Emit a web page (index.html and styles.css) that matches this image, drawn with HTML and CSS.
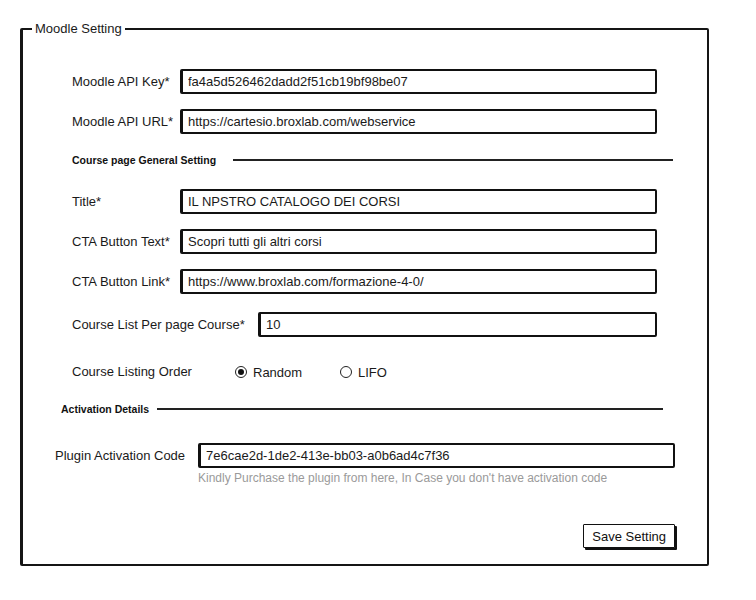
FILE: index.html
```html
<!DOCTYPE html>
<html lang="en">
<head>
<meta charset="utf-8">
<title>Moodle Setting</title>
<link rel="stylesheet" href="styles.css">
</head>
<body>
<fieldset class="frame">
  <legend class="frame-title">Moodle Setting</legend>
  <div class="content">
    <div class="row">
      <label class="label">Moodle API Key*</label>
      <input class="field" type="text" value="fa4a5d526462dadd2f51cb19bf98be07">
    </div>
    <div class="row">
      <label class="label">Moodle API URL*</label>
      <input class="field" type="text" value="https://cartesio.broxlab.com/webservice">
    </div>

    <div class="section section-course">
      <span class="section-title">Course page General Setting</span>
      <span class="section-line"></span>
    </div>

    <div class="row">
      <label class="label">Title*</label>
      <input class="field" type="text" value="IL NPSTRO CATALOGO DEI CORSI">
    </div>
    <div class="row">
      <label class="label">CTA Button Text*</label>
      <input class="field" type="text" value="Scopri tutti gli altri corsi">
    </div>
    <div class="row">
      <label class="label">CTA Button Link*</label>
      <input class="field" type="text" value="https://www.broxlab.com/formazione-4-0/">
    </div>
    <div class="row row-list">
      <label class="label label-wide">Course List Per page Course*</label>
      <input class="field" type="text" value="10">
    </div>

    <div class="radio-row">
      <span class="label label-order">Course Listing Order</span>
      <span class="radio-option"><span class="radio checked"></span>Random</span>
      <span class="radio-option"><span class="radio"></span>LIFO</span>
    </div>

    <div class="section section-activation">
      <span class="section-title">Activation Details</span>
      <span class="section-line"></span>
    </div>

    <div class="row row-activation">
      <label class="label label-activation">Plugin Activation Code</label>
      <input class="field" type="text" value="7e6cae2d-1de2-413e-bb03-a0b6ad4c7f36">
    </div>
    <p class="hint">Kindly Purchase the plugin from here, In Case you don't have activation code</p>

    <div class="actions">
      <button class="btn" type="button">Save Setting</button>
    </div>
  </div>
</fieldset>
</body>
</html>
```

FILE: styles.css
```css
* {
  box-sizing: border-box;
}

html, body {
  margin: 0;
  padding: 0;
  background: #fff;
}

body {
  font-family: "Liberation Sans", Arial, sans-serif;
  font-size: 13px;
  color: #1a1a1a;
  padding-top: 21px;
}

.frame {
  margin: 0 0 0 20px;
  width: 689px;
  padding: 0;
  border: 2px solid #151515;
  border-left-width: 3px;
  border-radius: 2px;
  min-width: 0;
}

.frame-title {
  margin-left: 9px;
  padding: 0 3px;
  font-size: 13px;
  line-height: 16px;
  color: #1a1a1a;
}

.content {
  padding: 32px 0 16px 0;
}

.row {
  display: flex;
  align-items: center;
  height: 25px;
  margin: 0 50px 15px 49px;
}

.label {
  flex: none;
  width: 108px;
  white-space: nowrap;
  font-size: 13px;
  line-height: 16px;
}

.label-wide {
  width: 186px;
}

.field {
  flex: 1;
  min-width: 0;
  height: 25px;
  margin: 0;
  padding: 0 4px 0 5px;
  border: 2px solid #111;
  border-left-width: 3px;
  border-radius: 2px;
  font-family: inherit;
  font-size: 13px;
  color: #1a1a1a;
  background: #fff;
  outline: none;
}

.section {
  display: flex;
  align-items: center;
  height: 14px;
}

.section-title {
  font-size: 10.5px;
  font-weight: bold;
  white-space: nowrap;
  color: #111;
}

.section-line {
  flex: 1;
  height: 0;
  border-top: 2px solid #222;
}

.section-course {
  margin: 19px 34px 22px 49px;
}

.section-course .section-line {
  margin-left: 17px;
}

.row.row-list {
  margin-top: 18px;
}

.radio-row {
  display: flex;
  align-items: center;
  height: 16px;
  margin: 27px 0 22px 49px;
}

.label-order {
  width: 163px;
}

.radio-option {
  display: flex;
  align-items: center;
  width: 105px;
}

.radio {
  display: inline-flex;
  align-items: center;
  justify-content: center;
  width: 12px;
  height: 12px;
  margin-right: 6px;
  border: 1.5px solid #222;
  border-radius: 50%;
}

.radio.checked::after {
  content: "";
  width: 6px;
  height: 6px;
  border-radius: 50%;
  background: #111;
}

.section-activation {
  margin: 0 44px 27px 38px;
}

.section-activation .section-line {
  margin-left: 8px;
}

.row.row-activation {
  margin: 0 32px 0 32px;
}

.label-activation {
  width: 143px;
}

.hint {
  margin: 3px 0 0 175px;
  font-size: 12px;
  line-height: 14px;
  color: #9a9a9a;
}

.actions {
  display: flex;
  justify-content: flex-end;
  margin: 39px 32px 0 0;
}

.btn {
  height: 24px;
  padding: 0 8px;
  border: 1.5px solid #111;
  border-radius: 1px;
  background: #fff;
  box-shadow: 2px 2px 0 #111;
  font-family: inherit;
  font-size: 13px;
  color: #111;
}
```
